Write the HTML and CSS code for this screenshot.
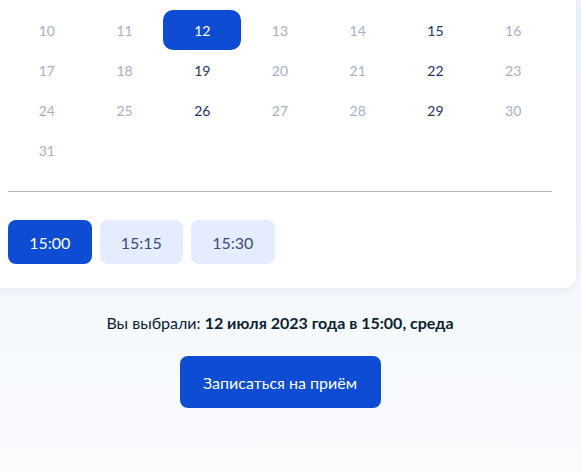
FILE: index.html
```html
<!DOCTYPE html>
<html lang="ru">
<head>
<meta charset="utf-8">
<title>Запись на приём</title>
<link rel="stylesheet" href="styles.css">
</head>
<body>
<div class="page">
  <section class="card">
    <div class="grid">
      <span class="day off">10</span><span class="day off">11</span><span class="day sel">12</span><span class="day off">13</span><span class="day off">14</span><span class="day on">15</span><span class="day off">16</span>
      <span class="day off">17</span><span class="day off">18</span><span class="day on">19</span><span class="day off">20</span><span class="day off">21</span><span class="day on">22</span><span class="day off">23</span>
      <span class="day off">24</span><span class="day off">25</span><span class="day on">26</span><span class="day off">27</span><span class="day off">28</span><span class="day on">29</span><span class="day off">30</span>
      <span class="day off">31</span>
    </div>
    <hr class="divider">
    <div class="times">
      <button class="time active">15:00</button>
      <button class="time">15:15</button>
      <button class="time">15:30</button>
    </div>
  </section>
  <p class="summary">Вы выбрали: <b>12 июля 2023 года в 15:00, среда</b></p>
  <div class="actions"><button class="submit">Записаться на приём</button></div>
</div>
</body>
</html>
```
FILE: styles.css
```css
html, body {
  margin: 0;
  padding: 0;
  height: 100%;
}
body {
  background: linear-gradient(180deg, #eef3fb 0%, #f5f8fc 60%, #f9fbfd 100%);
  font-family: Lato, "Noto Sans", sans-serif;
  color: #0b1f33;
  overflow: hidden;
}
.page {
  width: 592px;
  margin-left: -16px;
}
.card {
  background: #fff;
  border-radius: 0 0 12px 12px;
  padding: 10px 24px 24px;
  box-shadow: 0 2px 10px rgba(40, 80, 160, 0.08);
}
.grid {
  display: grid;
  grid-template-columns: repeat(7, 1fr);
  grid-auto-rows: 40px;
}
.day {
  display: flex;
  align-items: center;
  justify-content: center;
  font-size: 14px;
  border-radius: 10px;
}
.day.off { color: #a4b0c9; }
.day.on { color: #1d3468; }
.day.sel {
  background: #0d4cd3;
  color: #fff;
}
.divider {
  border: 0;
  border-top: 1px solid #b4b8bd;
  margin: 21px 0 28px;
}
.times {
  display: flex;
  gap: 8px;
}
.time {
  width: 83.5px;
  height: 44px;
  border: 0;
  border-radius: 8px;
  background: #e4ecfd;
  color: #3a4c7c;
  font-family: Lato, "Noto Sans", sans-serif;
  font-size: 16px;
  padding: 0;
}
.time.active {
  background: #0d4cd3;
  color: #fff;
}
.summary {
  margin: 25px 0 0;
  text-align: center;
  font-size: 16px;
  line-height: 20px;
  color: #0b1f33;
}
.summary b { font-weight: 700; }
.actions {
  display: flex;
  justify-content: center;
  margin-top: 23px;
}
.submit {
  width: 201px;
  height: 52px;
  border: 0;
  border-radius: 8px;
  background: #0d4cd3;
  color: #fff;
  font-family: Lato, "Noto Sans", sans-serif;
  font-size: 16px;
  padding: 0;
}
```
